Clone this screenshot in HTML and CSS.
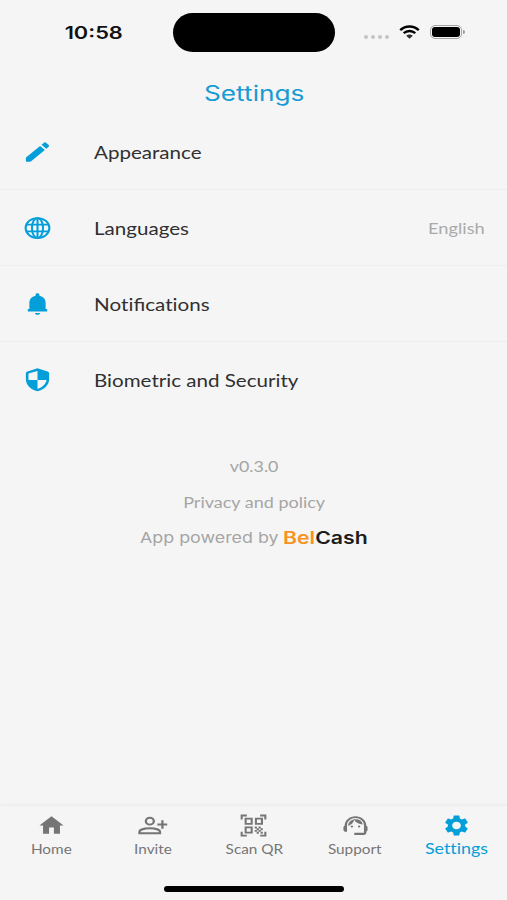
FILE: index.html
```html
<!DOCTYPE html>
<html lang="en">
<head>
<meta charset="utf-8">
<meta name="viewport" content="width=device-width, initial-scale=1">
<title>Settings</title>
<link rel="stylesheet" href="styles.css">
</head>
<body>
<div class="app">
  <header class="status">
    <div class="time"><span class="wide">10:58</span></div>
    <div class="island"></div>
    <div class="indicators">
      <div class="dots"><i></i><i></i><i></i><i></i></div>
      <svg class="wifi" viewBox="0 0 21 14" preserveAspectRatio="none"><path d="M1.2 5.1C6.5.2 14.500.2 19.800 5.100M4.700 8.200c3.300-3 8.300-3 11.600 0" fill="none" stroke="#000" stroke-width="2.400"/><path d="M7.200 10.800c1.900-1.700 4.700-1.700 6.600 0L10.500 13.800z"/></svg>
      <div class="battery"><div class="cell"></div></div><div class="nub"></div>
    </div>
  </header>
  <h1 class="title"><span class="wide">Settings</span></h1>
  <ul class="menu">
    <li>
      <svg viewBox="0 0 24 24" preserveAspectRatio="none"><path d="M3.300 16.800 14 6.400l3.700 3.700L7.100 20.600q-.4.400-1 .400H3.800q-.8 0-.8-.8v-2.500q0-.5.300-.9zM20.500 7.400l-1.700 1.600-3.700-3.700 1.700-1.700q1-1 2 0l1.700 1.700q1 1 0 2.100z"/></svg>
      <span class="wide label">Appearance</span>
    </li>
    <li>
      <svg viewBox="0 0 24 24" preserveAspectRatio="none"><g fill="none" stroke="currentColor" stroke-width="1.600"><circle cx="12" cy="12" r="9.200"/><ellipse cx="12" cy="12" rx="4.300" ry="9.200"/><path d="M3.600 8.800h16.800M3.600 15.200h16.800M12 2.800v18.400"/></g></svg>
      <span class="wide label">Languages</span>
      <span class="wide value">English</span>
    </li>
    <li>
      <svg viewBox="0 0 24 24" preserveAspectRatio="none"><path d="M12 22c1.100 0 2-.9 2-1.800h-4c0 .9.900 1.800 2 1.800zM18.300 16.500V11c0-3.500-1.700-5.900-4.800-6.700V3.600c0-1-.6-1.600-1.500-1.600s-1.500.6-1.500 1.600v.7C7.400 5.100 5.700 7.500 5.700 11v5.500H4.500V19h15v-2.500z"/></svg>
      <span class="wide label">No<span class="plain">ti</span>fica<span class="plain">ti</span>ons</span>
    </li>
    <li>
      <svg viewBox="0 0 24 24" preserveAspectRatio="none"><path fill-rule="evenodd" d="M12 1.200 4.200 4.100Q3 4.600 3 5.800v5.400c0 5.200 3.600 9.600 9 11.100 5.400-1.500 9-5.900 9-11.100V5.800q0-1.200-1.200-1.700zM12 3.600V12H5V6.100zM12 12h7c-.5 3.600-3.200 6.900-7 8.200z"/></svg>
      <span class="wide label">Biometric and Security</span>
    </li>
  </ul>
  <section class="about">
    <p class="version"><span class="wide">v0.3.0</span></p>
    <p class="privacy"><span class="wide">Privacy and policy</span></p>
    <p class="powered"><span class="wide by">App powered by</span><span class="wide brand"><b>Bel</b>Cash</span></p>
  </section>
  <nav class="tabs">
    <a class="tab">
      <svg viewBox="0 0 24 24" preserveAspectRatio="none"><path d="M10 20v-6h4v6h5v-8h3L12 3 2 12h3v8z"/></svg>
      <span class="wide">Home</span>
    </a>
    <a class="tab">
      <svg viewBox="0 0 24 24" preserveAspectRatio="none"><g fill="none" stroke="currentColor" stroke-width="1.900"><circle cx="9.800" cy="7.800" r="3.300"/><path d="M1.200 19.500v-1.400C1.200 13.600 18.200 13.600 18.200 18.100v1.400zM20.200 7v8M16 11h8.200"/></g></svg>
      <span class="wide">Invite</span>
    </a>
    <a class="tab">
      <svg viewBox="0 0 24 24" preserveAspectRatio="none"><g fill="none" stroke="currentColor" stroke-width="1.700"><path d="M2.200 6.200V2.400H6.500M17.500 2.400h4.300v3.800M6.500 21.800H2.200V18M21.800 18v3.800h-4.300M5.500 5.400h5v5h-5zM14 5.400h5v5h-5zM5.500 13.800h5v5h-5z"/></g><path d="M13 13h1.800v1.800H13zM16.200 13H18v1.800h-1.800zM14.600 14.700h1.800v1.800h-1.800zM17.900 14.700h1.800v1.800h-1.800zM13 16.300h1.800v1.800H13zM16.200 16.300H18v1.800h-1.800zM14.600 18h1.800v1.800h-1.800zM17.900 18h1.800v1.800h-1.800z"/></svg>
      <span class="wide">Scan QR</span>
    </a>
    <a class="tab">
      <svg viewBox="0 0 24 24" preserveAspectRatio="none"><path d="M21 12.220C21 6.730 16.740 3 12 3c-4.690 0-9 3.650-9 9.280-.6.340-1 .98-1 1.720v2c0 1.100.9 2 2 2h1v-6.100c0-3.870 3.130-7 7-7s7 3.130 7 7V19h-8v2h8c1.100 0 2-.9 2-2v-1.220c.59-.31 1-.92 1-1.640v-2.300c0-.7-.41-1.310-1-1.620z"/><circle cx="9" cy="13" r="1"/><circle cx="15" cy="13" r="1"/><path d="M18 11.030A6.040 6.040 0 0 0 12.050 6c-3.030 0-6.290 2.510-6.030 6.450a8.075 8.075 0 0 0 4.860-5.890c1.310 2.630 4 4.440 7.120 4.470z"/></svg>
      <span class="wide">Support</span>
    </a>
    <a class="tab active">
      <svg viewBox="0 0 24 24" preserveAspectRatio="none"><path d="M19.140 12.940c.04-.3.060-.61.060-.94 0-.32-.02-.64-.07-.94l2.030-1.580c.18-.14.230-.41.120-.61l-1.920-3.320c-.12-.22-.37-.29-.59-.22l-2.390.96c-.5-.38-1.030-.7-1.620-.94l-.36-2.540c-.04-.24-.24-.41-.48-.41h-3.840c-.24 0-.43.170-.47.410l-.36 2.540c-.59.240-1.130.570-1.620.940l-2.390-.96c-.22-.08-.47 0-.59.220L2.740 8.870c-.12.210-.08.470.12.610l2.030 1.580c-.05.300-.09.630-.09.940s.02.640.070.940l-2.030 1.580c-.18.140-.23.410-.12.610l1.920 3.320c.12.220.370.290.590.220l2.390-.96c.5.380 1.030.700 1.620.940l.36 2.540c.05.240.240.410.480.410h3.840c.24 0 .44-.17.470-.41l.36-2.540c.59-.24 1.130-.56 1.620-.94l2.390.96c.22.080.470 0 .590-.22l1.920-3.320c.12-.22.070-.47-.12-.61l-2.010-1.580zM12 15.600c-1.980 0-3.600-1.620-3.600-3.600s1.620-3.600 3.600-3.600 3.600 1.620 3.600 3.600-1.620 3.600-3.600 3.600z"/></svg>
      <span class="wide plain">Settings</span>
    </a>
  </nav>
  <div class="home-bar"></div>
</div>
</body>
</html>
```

FILE: styles.css
```css
* { box-sizing: border-box; margin: 0; padding: 0; }
body { background: #f5f5f5; font-family: Lato, sans-serif; color: #303030; }
svg { display: block; fill: currentColor; overflow: visible; flex: none; }
.app { height: 900px; display: flex; flex-direction: column; overflow: hidden; }
.wide { display: inline-block; white-space: nowrap; transform: scaleX(1.25); }
.plain { font-variant-ligatures: none; }

.status { height: 64px; display: grid; grid-template-columns: 173px 162px 1fr; align-items: center; }
.time { text-align: center; padding: 1px 0 0 14px; font: 600 17px/20px Inter, sans-serif; color: #111; }
.time .wide { transform: scaleX(1.28); }
.island { height: 39px; border-radius: 20px; background: #000; }
.indicators { display: flex; align-items: center; padding-left: 29px; }
.dots { display: flex; gap: 3px; padding-top: 9px; width: 26px; margin-right: 9px; }
.dots i { width: 4px; height: 4px; border-radius: 50%; background: #c4c4c4; }
.wifi { width: 21px; height: 14px; }
.battery { width: 32px; height: 14px; margin-left: 10px; border: 1px solid #a5a5a5; border-radius: 5px; padding: 1px; }
.cell { height: 10px; border-radius: 3px; background: #000; }
.nub { width: 2px; height: 4px; margin-left: 1px; border-radius: 0 2px 2px 0; background: #999; }

.title { height: 50px; padding: 15px 0 0 1px; text-align: center; font: 400 21px/29px Inter, sans-serif; color: #169bd3; }
.menu { list-style: none; }
.menu li { height: 76px; display: flex; align-items: center; padding: 0 22px; border-bottom: 1px solid #ededed; }
.menu li:last-child { border-bottom: 0; }
.menu svg { width: 31px; height: 26px; color: #049fd9; }
.label { margin: 2px 0 0 41px; font-size: 17px; line-height: 24px; transform: scaleX(1.21); transform-origin: left; }
.value { margin-left: auto; font-size: 16px; color: #aaa; transform: scaleX(1.14); transform-origin: right; }

.about { flex: 1; padding: 36px 0 0 1px; text-align: center; font-size: 15.5px; color: #a5a5a5; }
.about p { line-height: 24px; height: 36px; }
.version .wide { transform: scaleX(1.15); }
.privacy .wide { transform: scaleX(1.16); }
.powered { display: flex; padding-left: 139px; font: 400 15px/24px Inter, sans-serif; }
.powered .wide { transform-origin: left; }
.powered .by { width: 143px; text-align: left; transform: scaleX(1.19); }
.brand { font-size: 17px; font-weight: 600; color: #1c1c1c; }
.brand b { font-weight: 600; color: #f7931e; }

.tabs { height: 80px; display: grid; grid-template-columns: repeat(5, 1fr); padding: 7px 0 0 1px; box-shadow: 0 -2px 3px rgba(0,0,0,.035); }
.tab { display: flex; flex-direction: column; align-items: center; font-size: 13px; line-height: 20px; color: #757575; }
.tab svg { width: 29px; height: 25px; }
.tab span { margin-top: 1px; transform: scaleX(1.18); }
.tab.active { color: #049fd9; font-size: 15px; }
.tab.active span { margin-top: 0; transform: scaleX(1.19); }
.home-bar { width: 180px; height: 6px; margin: 0 163px 8px 164px; border-radius: 3px; background: #000; }
```
